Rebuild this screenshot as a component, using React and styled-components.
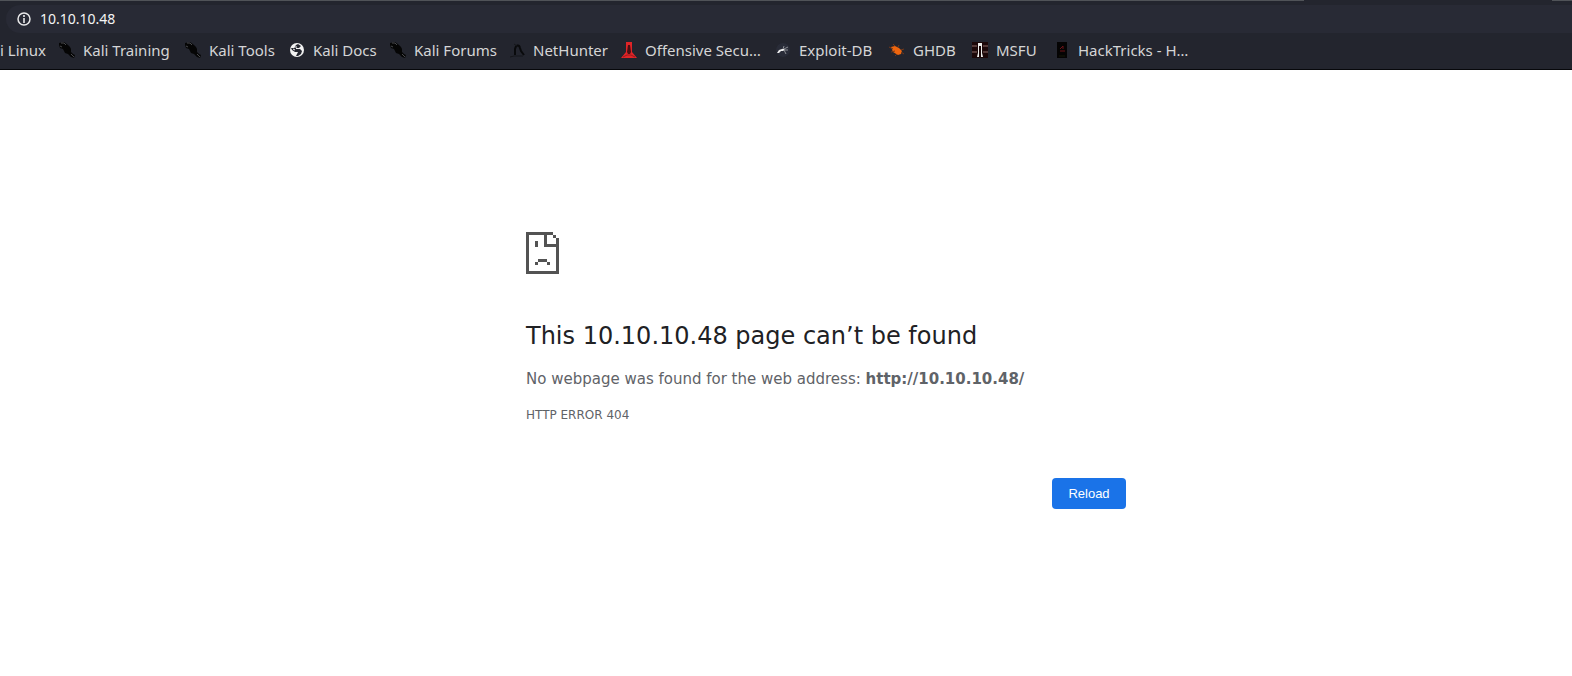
import React from "react";
import styled, { createGlobalStyle } from "styled-components";

const GlobalStyle = createGlobalStyle`
  *, *::before, *::after { box-sizing: border-box; }
  body {
    margin: 0;
    overflow-x: hidden;
    background: #ffffff;
    font-family: "DejaVu Sans", sans-serif;
  }
`;

const BrowserBar = styled.header`
  background: #23252e;
  border-bottom: 1px solid #07080b;
  font-family: "Noto Sans", sans-serif;
`;

const TabStrip = styled.div`
  display: flex;
  justify-content: space-between;
  height: 5px;
`;

const TabEdge = styled.span`
  height: 1px;
  background: #505358;
  flex: ${(p) => (p.$grow ? "1" : "0 0 20px")};
  margin-right: ${(p) => (p.$grow ? "248px" : "0")};
`;

const AddressBar = styled.div`
  display: flex;
  align-items: center;
  gap: 8px;
  height: 28px;
  margin-left: 6px;
  padding-left: 10px;
  border-radius: 14px 0 0 14px;
  background: #282a35;
`;

const AddressInput = styled.input`
  flex: 1;
  min-width: 0;
  padding: 0;
  border: 0;
  outline: 0;
  background: transparent;
  color: #f4f4f4;
  font: 14px/20px "Noto Sans", sans-serif;
`;

const Bookmarks = styled.nav`
  display: flex;
  align-items: center;
  gap: 16px;
  height: 36px;
  padding-bottom: 2px;
  overflow: hidden;
`;

const Bookmark = styled.a`
  display: flex;
  align-items: center;
  flex: none;
  gap: 8px;
  width: ${(p) => p.$width}px;
  color: #d5d5d6;
  font-size: 15px;
  line-height: 20px;
  text-decoration: none;
  white-space: nowrap;
`;

const Favicon = styled.svg`
  display: block;
  flex: none;
  width: 16px;
  height: 16px;
`;

const ErrorPage = styled.main`
  padding: 162px 0 40px 80px;
`;

const ErrorContent = styled.div`
  max-width: 600px;
  margin: 0 auto;
`;

const SadPage = styled.svg`
  display: block;
  width: 33px;
  height: 42px;
`;

const Title = styled.h1`
  margin: 47px 0 16px;
  color: #202124;
  font-size: 24px;
  font-weight: 500;
  line-height: 30px;
`;

const Message = styled.p`
  margin: 0 0 12px;
  color: #5f6368;
  font-size: 15px;
  line-height: 24px;
`;

const ErrorCode = styled.div`
  color: #5f6368;
  font-size: 12px;
  line-height: 24px;
`;

const Actions = styled.div`
  display: flex;
  justify-content: flex-end;
  margin-top: 51px;
`;

const ReloadButton = styled.button`
  min-width: 74px;
  padding: 8px 16px;
  border: 0;
  border-radius: 4px;
  background: #1a73e8;
  color: #ffffff;
  font: 13px/15px "Liberation Sans", Arial, sans-serif;
  cursor: pointer;
`;

const Dragon = () => (
  <Favicon viewBox="0 0 16 16" aria-hidden="true">
    <path d="M0 1l5-1 4 3 2 2 1 2 0 3 2 2 2 1-1 3-3-1-3-3-3-1-2-4-3-1-1-3z" fill="#050505" />
    <path d="M2 1l3 0 2 2M1 4l2 1M12 12l3 3" stroke="#48494c" fill="none" />
  </Favicon>
);

const Globe = () => (
  <Favicon viewBox="0 0 16 16" aria-hidden="true">
    <circle cx="8" cy="8" r="7" fill="#f1f1f1" />
    <path d="M9 2l3 2-2 2-3 0 0 1 4 0 2 2-1 3-3 2-2 0 1-2 1-2-3 0-3-2-1-2 3 0 2-3z" fill="#23252e" />
    <path d="M5 5h3M4 7l2 1" stroke="#f1f1f1" />
  </Favicon>
);

const NetHunter = () => (
  <Favicon viewBox="0 0 16 16" aria-hidden="true">
    <path d="M6 13V7c1-4 4-5 5-1l1 3 3 4" fill="none" stroke="#090a0c" strokeWidth="2" />
    <path d="M1 15l4-1h9M5 2l3 2" stroke="#15161a" fill="none" />
  </Favicon>
);

const Offensive = () => (
  <Favicon viewBox="0 0 16 16" aria-hidden="true">
    <path d="M5 0h6v10l5 6H0l5-6z" fill="#e02427" />
    <path d="M7 3h2l1 7-1 2H7l-1-2z" fill="#4a1013" />
    <path d="M2 15l4-2h4l4 2" stroke="#981a1d" fill="none" />
  </Favicon>
);

const ExploitDb = () => (
  <Favicon viewBox="0 0 16 16" aria-hidden="true">
    <circle cx="8" cy="8" r="7" fill="#292c38" />
    <path d="M2 11l2-3 3-1 2 0 1 1-2 1-2 0-2 2z" fill="#eeeeee" />
    <path d="M8 7l1-3M9 7l4-2M9 8l4 0M9 8l2 4" stroke="#8b8d93" fill="none" />
  </Favicon>
);

const Ghdb = () => (
  <Favicon viewBox="0 0 16 16" aria-hidden="true">
    <path d="M2 5l4-1 4 2 3 3-1 3-3 1-5-3z" fill="#ee650e" />
    <path d="M0 5l4 2M2 10l4-1M6 4L4 2M9 5l1-2M12 8l3-1M12 10l3 2M8 12l-2 2" stroke="#74391a" fill="none" />
  </Favicon>
);

const Msfu = () => (
  <Favicon viewBox="0 0 16 16" aria-hidden="true">
    <path d="M0 0h16v16H0z" fill="#1c0809" />
    <path d="M0 4h5M11 4h5M0 10h5M11 10h5" stroke="#553a39" strokeWidth="2" />
    <path d="M6 1h4v10l1 4H9V4H7v11H5l1-4z" fill="#eeeeec" />
  </Favicon>
);

const HackTricks = () => (
  <Favicon viewBox="0 0 16 16" aria-hidden="true">
    <path d="M3 0h10v16H3z" fill="#050404" />
    <path d="M6 7l3-3v3M6 9h5" stroke="#6d1217" fill="none" />
    <path d="M5 14h6" stroke="#171807" />
  </Favicon>
);

const bookmarks = [
  { label: "Kali Training", Icon: Dragon, width: 110 },
  { label: "Kali Tools", Icon: Dragon, width: 88 },
  { label: "Kali Docs", Icon: Globe, width: 85 },
  { label: "Kali Forums", Icon: Dragon, width: 103 },
  { label: "NetHunter", Icon: NetHunter, width: 96 },
  { label: "Offensive Secu…", Icon: Offensive, width: 138 },
  { label: "Exploit-DB", Icon: ExploitDb, width: 98 },
  { label: "GHDB", Icon: Ghdb, width: 67 },
  { label: "MSFU", Icon: Msfu, width: 66 },
  { label: "HackTricks - H…", Icon: HackTricks, width: 138 },
];

export default function App() {
  return (
    <>
      <GlobalStyle />
      <BrowserBar>
        <TabStrip>
          <TabEdge $grow />
          <TabEdge />
        </TabStrip>
        <AddressBar>
          <Favicon viewBox="0 0 16 16" aria-hidden="true">
            <circle cx="8" cy="8" r="6" fill="none" stroke="#e8e8e9" strokeWidth="1.5" />
            <path d="M8 4v2M8 7v5" stroke="#e8e8e9" strokeWidth="1.6" />
          </Favicon>
          <AddressInput aria-label="Address" defaultValue="10.10.10.48" spellCheck="false" />
        </AddressBar>
        <Bookmarks aria-label="Bookmarks">
          <Bookmark href="#" $width={43}>i Linux</Bookmark>
          {bookmarks.map(({ label, Icon, width }) => (
            <Bookmark href="#" key={label} $width={width}>
              <Icon />
              {label}
            </Bookmark>
          ))}
        </Bookmarks>
      </BrowserBar>
      <ErrorPage>
        <ErrorContent>
          <SadPage viewBox="0 0 11 14" shapeRendering="crispEdges" aria-hidden="true">
            <path
              fill="#535353"
              d="M0 0h9v1H7v3h3V2h1v12H0zM1 1v12h9V5H6V1zM9 1h1v1H9zM3 3h1v2H3zM4 9h3v1H4zM3 10h1v1H3zM7 10h1v1H7z"
              fillRule="evenodd"
            />
          </SadPage>
          <Title>This 10.10.10.48 page can’t be found</Title>
          <Message>
            No webpage was found for the web address: <strong>http://10.10.10.48/</strong>
          </Message>
          <ErrorCode>HTTP ERROR 404</ErrorCode>
          <Actions>
            <ReloadButton type="button">Reload</ReloadButton>
          </Actions>
        </ErrorContent>
      </ErrorPage>
    </>
  );
}
